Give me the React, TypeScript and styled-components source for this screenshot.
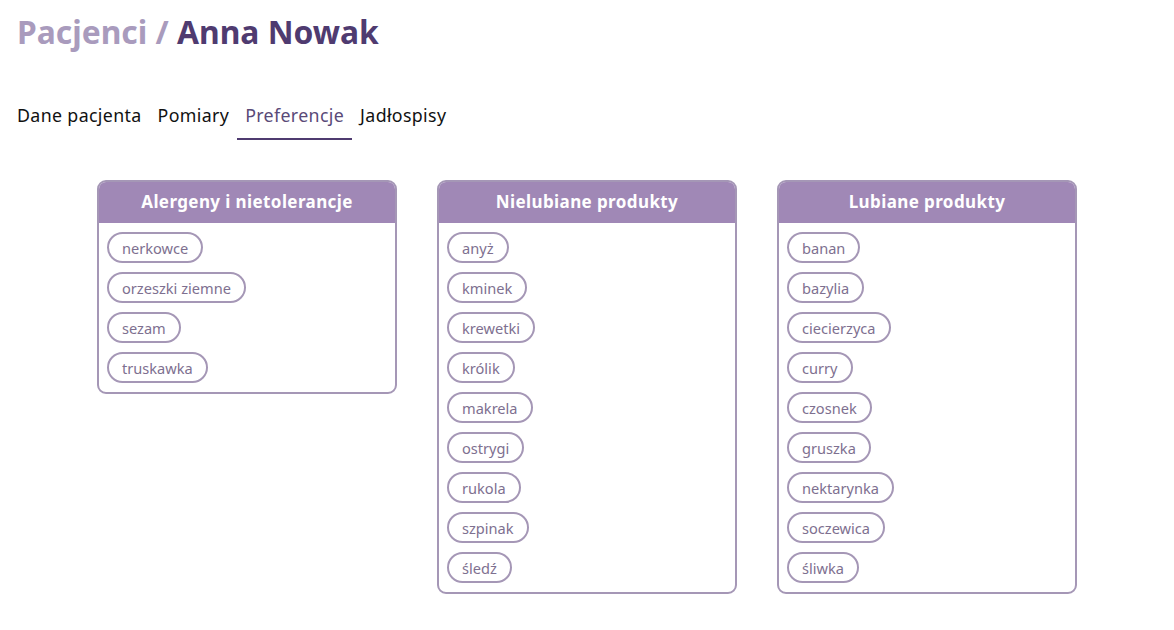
import React from 'react';
import styled, { createGlobalStyle } from 'styled-components';

const colors = {
  dark: '#4f3b70',
  light: '#a99bbd',
  header: '#a088b6',
  border: '#a597b6',
  chipText: '#7e7090',
};

const GlobalStyle = createGlobalStyle`
  html, body {
    margin: 0;
    padding: 0;
    background: #fff;
  }
  body {
    font-family: 'Noto Sans', 'Open Sans', sans-serif;
    color: #111;
  }
`;

const Page = styled.div`
  padding: 10px 17px;
`;

const Title = styled.h1`
  margin: 0;
  font-size: 31.8px;
  font-weight: 700;
  line-height: 44px;
  color: ${colors.dark};
`;

const Crumb = styled.span`
  color: ${colors.light};
`;

const Tabs = styled.nav`
  display: flex;
  margin-top: 47px;
  margin-left: -8px;
`;

const Tab = styled.div<{ $active?: boolean }>`
  padding: 2px 8px 0;
  height: 35px;
  display: flex;
  align-items: flex-start;
  font-size: 17.8px;
  letter-spacing: 0.35px;
  color: ${({ $active }) => ($active ? '#5a4a78' : '#111')};
  border-bottom: 2px solid ${({ $active }) => ($active ? colors.dark : 'transparent')};
`;

const Columns = styled.div`
  display: flex;
  align-items: flex-start;
  gap: 40px;
  margin-top: 40px;
  margin-left: 80px;
`;

const Card = styled.section`
  width: 300px;
  box-sizing: border-box;
  border: 2px solid ${colors.border};
  border-radius: 9px;
  overflow: hidden;
`;

const CardHeader = styled.header`
  background: ${colors.header};
  color: #fff;
  font-weight: 700;
  font-size: 17px;
  letter-spacing: 0.4px;
  height: 43px;
  display: flex;
  align-items: center;
  justify-content: center;
  margin: -2px -2px 0;
`;

const ChipList = styled.div`
  display: flex;
  flex-direction: column;
  align-items: flex-start;
  gap: 9px;
  padding: 9px 8px 9px;
`;

const Chip = styled.span`
  box-sizing: border-box;
  height: 31px;
  display: inline-flex;
  align-items: center;
  padding: 0 13px;
  border: 2px solid ${colors.border};
  border-radius: 16px;
  font-size: 14.6px;
  color: ${colors.chipText};
`;

const groups = [
  {
    title: 'Alergeny i nietolerancje',
    items: ['nerkowce', 'orzeszki ziemne', 'sezam', 'truskawka'],
  },
  {
    title: 'Nielubiane produkty',
    items: ['anyż', 'kminek', 'krewetki', 'królik', 'makrela', 'ostrygi', 'rukola', 'szpinak', 'śledź'],
  },
  {
    title: 'Lubiane produkty',
    items: ['banan', 'bazylia', 'ciecierzyca', 'curry', 'czosnek', 'gruszka', 'nektarynka', 'soczewica', 'śliwka'],
  },
];

const tabs = ['Dane pacjenta', 'Pomiary', 'Preferencje', 'Jadłospisy'];

export default function App() {
  return (
    <Page>
      <GlobalStyle />
      <Title>
        <Crumb>Pacjenci / </Crumb>Anna Nowak
      </Title>
      <Tabs>
        {tabs.map((t) => (
          <Tab key={t} $active={t === 'Preferencje'}>
            {t}
          </Tab>
        ))}
      </Tabs>
      <Columns>
        {groups.map((g) => (
          <Card key={g.title}>
            <CardHeader>{g.title}</CardHeader>
            <ChipList>
              {g.items.map((i) => (
                <Chip key={i}>{i}</Chip>
              ))}
            </ChipList>
          </Card>
        ))}
      </Columns>
    </Page>
  );
}
